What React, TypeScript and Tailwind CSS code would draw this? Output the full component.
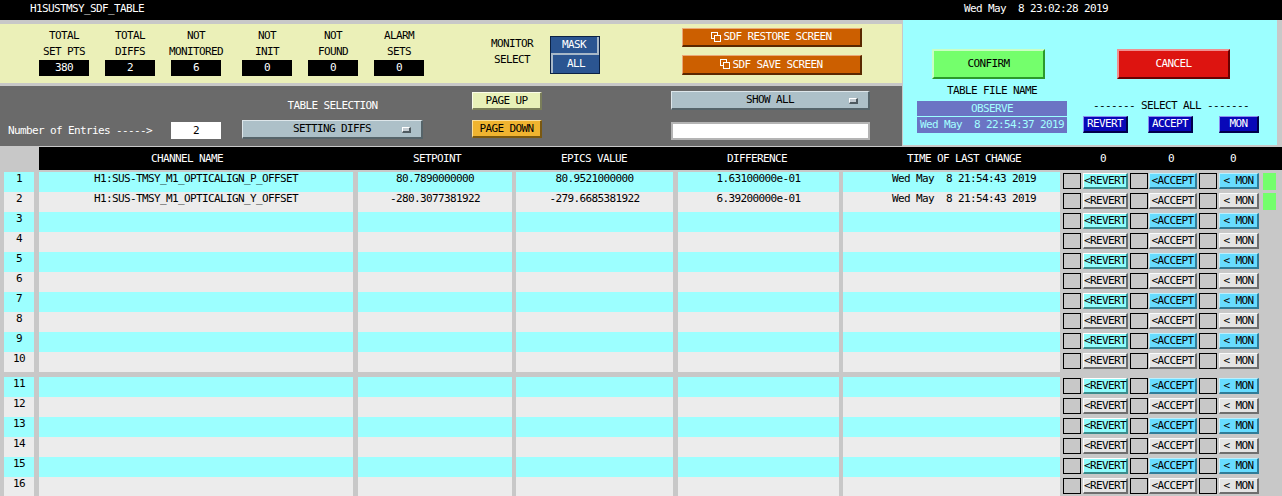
import React from "react";

type Tone = "cyan" | "blue" | "gray";

interface IChannelRow {
  name: string;
  setpoint: string;
  epics: string;
  diff: string;
  time: string;
}

const channels: IChannelRow[] = [
  {
    name: "H1:SUS-TMSY_M1_OPTICALIGN_P_OFFSET",
    setpoint: "80.7890000000",
    epics: "80.9521000000",
    diff: "1.63100000e-01",
    time: "Wed May  8 21:54:43 2019",
  },
  {
    name: "H1:SUS-TMSY_M1_OPTICALIGN_Y_OFFSET",
    setpoint: "-280.3077381922",
    epics: "-279.6685381922",
    diff: "6.39200000e-01",
    time: "Wed May  8 21:54:43 2019",
  },
];

const counters = [
  { top: "TOTAL", bottom: "SET PTS", value: "380", ml: "ml-[39px]" },
  { top: "TOTAL", bottom: "DIFFS", value: "2", ml: "ml-[16px]" },
  { top: "NOT", bottom: "MONITORED", value: "6", ml: "ml-[16px]" },
  { top: "NOT", bottom: "INIT", value: "0", ml: "ml-[21px]" },
  { top: "NOT", bottom: "FOUND", value: "0", ml: "ml-[16px]" },
  { top: "ALARM", bottom: "SETS", value: "0", ml: "ml-[16px]" },
];

const toneClass: Record<Tone, string> = {
  cyan: "bg-[#8ffcfc] border-t-white border-l-white border-b-[#3a8c8c] border-r-[#3a8c8c]",
  blue: "bg-[#68dcff] border-t-[#b8f0ff] border-l-[#b8f0ff] border-b-[#2f7c98] border-r-[#2f7c98]",
  gray: "bg-[#e4e4e4] border-t-[#fafafa] border-l-[#fafafa] border-b-[#6e6e6e] border-r-[#6e6e6e]",
};

function CopyIcon() {
  return (
    <svg width="11" height="11" viewBox="0 0 11 11" className="mr-[1px]">
      <rect x="0.5" y="0.5" width="6" height="6" fill="none" stroke="white" />
      <rect x="3.5" y="3.5" width="6" height="6" fill="#cc5f00" stroke="white" />
    </svg>
  );
}

function MenuMark() {
  return (
    <span className="absolute right-[10px] top-[6px] w-[9px] h-[6px] bg-[#c4ccd2] border-t border-l border-t-white border-l-white border-b-2 border-r-2 border-b-[#4e5a60] border-r-[#4e5a60]" />
  );
}

function RowButton({ label, tone, w }: { label: string; tone: Tone; w: string }) {
  return (
    <div
      className={`${w} h-[16px] mt-[1px] border border-b-2 border-r-2 ${toneClass[tone]} flex items-center justify-center leading-[12px] whitespace-pre text-black`}
    >
      {label}
    </div>
  );
}

function CheckBox() {
  return <div className="w-[18px] h-[16px] mt-[1px] border border-black bg-[#c8c8c8]" />;
}

function TableRow({ n }: { n: number }) {
  const data = channels[n - 1];
  const odd = n % 2 === 1;
  const bg = odd ? "bg-[#9cffff]" : "bg-[#ececec]";
  return (
    <div className="flex h-[20px] text-black whitespace-pre">
      <div className={`ml-[4px] w-[30px] ${bg} text-center`}>{n}</div>
      <div className={`ml-[5px] w-[314px] ${bg} text-center`}>{data?.name}</div>
      <div className={`ml-[5px] w-[154px] ${bg} text-center`}>{data?.setpoint}</div>
      <div className={`ml-[4px] w-[157px] ${bg} text-center`}>{data?.epics}</div>
      <div className={`ml-[5px] w-[161px] ${bg} text-center`}>{data?.diff}</div>
      <div className={`ml-[4px] w-[217px] pl-[25px] ${bg} text-center`}>{data?.time}</div>
      <div className="ml-[3px]">
        <CheckBox />
      </div>
      <div className="ml-[2px]">
        <RowButton label="<REVERT" tone={odd ? "cyan" : "gray"} w="w-[45px]" />
      </div>
      <div className="ml-[2px]">
        <CheckBox />
      </div>
      <div className="ml-[1px]">
        <RowButton label="<ACCEPT" tone={odd ? "blue" : "gray"} w="w-[48px]" />
      </div>
      <div className="ml-[2px]">
        <CheckBox />
      </div>
      <div className="ml-[2px]">
        <RowButton label="< MON" tone={odd ? "blue" : "gray"} w="w-[40px]" />
      </div>
      {data && <div className="ml-[4px] mt-[1px] w-[13px] h-[17px] bg-[#74ff6c]" />}
    </div>
  );
}

function StatusPanel() {
  return (
    <div className="h-[59px] bg-[#ebf0b8] flex items-start text-black">
      {counters.map((c) => (
        <div key={c.bottom} className={`${c.ml} w-[50px] flex flex-col items-center whitespace-nowrap`}>
          <div className="pt-[4px] leading-[16px] text-center">
            <div>{c.top}</div>
            <div>{c.bottom}</div>
          </div>
          <div className="w-[50px] h-[16px] bg-black text-white text-center leading-[16px]">{c.value}</div>
        </div>
      ))}
      <div className="ml-[58px] w-[60px] pt-[12px] leading-[16px] text-center">
        <div>MONITOR</div>
        <div>SELECT</div>
      </div>
      <div className="ml-[8px] mt-[12px] w-[50px] h-[38px] bg-[#0c2244] p-[1px] flex flex-col text-white">
        <div className="h-[18px] bg-[#2b5591] border-r-2 border-b-2 border-[#a8b8c8] flex items-center justify-center">
          MASK
        </div>
        <div className="h-[18px] bg-[#2b5591] border-l-2 border-[#a8b8c8] flex items-center justify-center">
          ALL
        </div>
      </div>
      <div className="ml-[82px] w-[180px] flex flex-col text-white">
        <div className="mt-[4px] h-[19px] bg-[#cc5f00] border border-b-2 border-r-2 border-t-[#eaa878] border-l-[#eaa878] border-b-[#5a2800] border-r-[#5a2800] flex items-center justify-center">
          <CopyIcon />
          SDF RESTORE SCREEN
        </div>
        <div className="mt-[8px] h-[20px] bg-[#cc5f00] border border-b-2 border-r-2 border-t-[#eaa878] border-l-[#eaa878] border-b-[#5a2800] border-r-[#5a2800] flex items-center justify-center">
          <CopyIcon />
          SDF SAVE SCREEN
        </div>
      </div>
    </div>
  );
}

function SelectionPanel() {
  return (
    <div className="mt-[3px] h-[60px] bg-[#6a6a6a] flex items-start">
      <div className="w-[242px] pl-[8px] pt-[36px] flex items-center text-white">
        <span>Number of Entries -----&gt;</span>
        <div className="ml-[19px] w-[50px] h-[17px] bg-white text-black text-center leading-[17px]">2</div>
      </div>
      <div className="w-[181px] flex flex-col">
        <div className="pt-[13px] leading-[14px] text-center text-white">TABLE SELECTION</div>
        <div className="relative mt-[7px] h-[19px] bg-[#adc0c8] border border-b-2 border-r-2 border-t-[#dde6ea] border-l-[#dde6ea] border-b-[#56646a] border-r-[#56646a] flex items-center justify-center text-black">
          SETTING DIFFS
          <MenuMark />
        </div>
      </div>
      <div className="ml-[49px] w-[70px] flex flex-col text-black">
        <div className="mt-[6px] h-[18px] bg-[#e8f0b8] border border-b-2 border-r-2 border-t-[#fbfde8] border-l-[#fbfde8] border-b-[#7a7e5a] border-r-[#7a7e5a] flex items-center justify-center">
          PAGE UP
        </div>
        <div className="mt-[10px] h-[18px] bg-[#f0b430] border border-b-2 border-r-2 border-t-[#fde09a] border-l-[#fde09a] border-b-[#7a5810] border-r-[#7a5810] flex items-center justify-center">
          PAGE DOWN
        </div>
      </div>
      <div className="ml-[129px] w-[199px] flex flex-col text-black">
        <div className="relative mt-[5px] h-[19px] bg-[#adc0c8] border border-b-2 border-r-2 border-t-[#dde6ea] border-l-[#dde6ea] border-b-[#56646a] border-r-[#56646a] flex items-center justify-center">
          SHOW ALL
          <MenuMark />
        </div>
        <div className="mt-[12px] h-[18px] bg-white border-2 border-[#b4b4b4]" />
      </div>
    </div>
  );
}

function ConfirmPanel() {
  return (
    <div className="ml-[1px] w-[374px] h-[125px] bg-[#9cffff] flex text-black">
      <div className="w-[180px] flex flex-col">
        <div className="ml-[29px] mt-[29px] w-[113px] h-[30px] bg-[#74ff6c] border-2 border-t-[#caffc4] border-l-[#caffc4] border-b-[#2c9a2c] border-r-[#2c9a2c] flex items-center justify-center">
          CONFIRM
        </div>
        <div className="ml-[14px] w-[150px] mt-[5px] leading-[14px] text-center">TABLE FILE NAME</div>
        <div className="ml-[14px] w-[150px] mt-[3px] h-[15px] bg-[#6b74c4] text-[#a4ffff] text-center leading-[15px]">
          OBSERVE
        </div>
        <div className="ml-[14px] w-[150px] mt-[1px] h-[16px] bg-[#6b74c4] text-[#a4ffff] text-center leading-[16px] whitespace-pre">
          Wed May  8 22:54:37 2019
        </div>
      </div>
      <div className="flex-1 flex flex-col">
        <div className="ml-[34px] mt-[29px] w-[113px] h-[30px] bg-[#dd1410] border-2 border-t-[#f09090] border-l-[#f09090] border-b-[#6a0000] border-r-[#6a0000] flex items-center justify-center text-white">
          CANCEL
        </div>
        <div className="pl-[10px] mt-[20px] leading-[14px] whitespace-pre">------- SELECT ALL -------</div>
        <div className="mt-[3px] flex text-white">
          <div className="w-[45px] h-[17px] bg-[#0808b8] border border-b-2 border-r-2 border-t-[#8c8cf0] border-l-[#8c8cf0] border-b-[#00004a] border-r-[#00004a] flex items-center justify-center">
            REVERT
          </div>
          <div className="ml-[20px] w-[45px] h-[17px] bg-[#0808b8] border border-b-2 border-r-2 border-t-[#8c8cf0] border-l-[#8c8cf0] border-b-[#00004a] border-r-[#00004a] flex items-center justify-center">
            ACCEPT
          </div>
          <div className="ml-[26px] w-[40px] h-[17px] bg-[#0808b8] border border-b-2 border-r-2 border-t-[#8c8cf0] border-l-[#8c8cf0] border-b-[#00004a] border-r-[#00004a] flex items-center justify-center">
            MON
          </div>
        </div>
      </div>
    </div>
  );
}

export default function App() {
  return (
    <div className="w-[1282px] h-[496px] overflow-hidden bg-[#c8c8c8] font-['DejaVu_Sans_Mono',monospace] text-[11px] tracking-[-0.62px] leading-[14px]">
      <div className="h-[20px] bg-black text-white flex items-center pb-[2px] whitespace-pre">
        <span className="w-[964px] pl-[30px]">H1SUSTMSY_SDF_TABLE</span>
        <span>Wed May  8 23:02:28 2019</span>
      </div>

      <div className="h-[127px] flex items-start">
        <div className="w-[902px] pt-[4px] flex flex-col">
          <StatusPanel />
          <SelectionPanel />
        </div>
        <ConfirmPanel />
      </div>

      <div className="flex h-[23px]">
        <div className="w-[39px]" />
        <div className="flex-1 bg-black text-white flex items-center">
          <span className="w-[296px] text-center">CHANNEL NAME</span>
          <span className="w-[204px] text-center">SETPOINT</span>
          <span className="w-[110px] text-center">EPICS VALUE</span>
          <span className="w-[216px] text-center">DIFFERENCE</span>
          <span className="w-[198px] text-center">TIME OF LAST CHANGE</span>
          <span className="w-[80px] text-center">0</span>
          <span className="w-[56px] text-center">0</span>
          <span className="w-[68px] text-center">0</span>
        </div>
      </div>

      <div className="mt-[2px] flex flex-col">
        {[1, 2, 3, 4, 5, 6, 7, 8, 9, 10].map((n) => (
          <TableRow key={n} n={n} />
        ))}
      </div>
      <div className="mt-[5px] flex flex-col">
        {[11, 12, 13, 14, 15, 16].map((n) => (
          <TableRow key={n} n={n} />
        ))}
      </div>
    </div>
  );
}
